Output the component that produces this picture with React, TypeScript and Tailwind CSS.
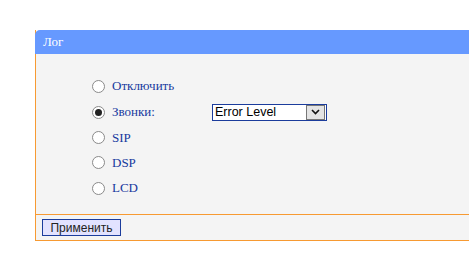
import React from 'react';

const options = [
  { label: 'Отключить', h: 'h-[26px]' },
  { label: 'Звонки:', h: 'h-[26px]', checked: true, select: true },
  { label: 'SIP', h: 'h-[25px]' },
  { label: 'DSP', h: 'h-[25px]' },
  { label: 'LCD', h: 'h-[26px]' },
];

const Radio: React.FC<{ checked?: boolean }> = ({ checked }) => (
  <span className="w-[13px] h-[13px] rounded-full border border-[#8a8a8a] bg-white flex items-center justify-center shrink-0">
    {checked && <span className="w-[7px] h-[7px] rounded-full bg-[#222]" />}
  </span>
);

export default function App() {
  return (
    <div className="w-[469px] h-[256px] bg-white overflow-hidden pt-[30px] pl-[35px]">
      <div className="w-[450px] border-l border-b border-[#f79a32]">
        {/* Header */}
        <div className="h-[24px] bg-[#6699ff] rounded-tl-[5px] -ml-px pl-[8px] flex items-center text-white text-[13px] font-['Liberation_Serif',serif]">
          Лог
        </div>

        {/* Options */}
        <div className="bg-[#f4f4f4] pt-[19px] pb-[13px] pl-[56px] flex flex-col font-['Liberation_Serif',serif] text-[13px] text-[#17399e]">
          {options.map((o) => (
            <div key={o.label} className={`${o.h} flex items-center`}>
              <Radio checked={o.checked} />
              <span className="ml-[7px] w-[100px]">{o.label}</span>
              {o.select && (
                <div className="w-[115px] h-[17px] border border-[#1b3c9c] bg-white flex items-center justify-between text-[12.5px] text-black font-['Liberation_Sans',sans-serif]">
                  <span className="pl-[2px] leading-none">Error Level</span>
                  <span className="w-[19px] h-[15px] mr-px border border-[#777] bg-[#e4e4e4] flex items-center justify-center">
                    <svg width="9" height="6" viewBox="0 0 9 6">
                      <path d="M1 1 L4.5 4.5 L8 1" fill="none" stroke="#111" strokeWidth="1.6" />
                    </svg>
                  </span>
                </div>
              )}
            </div>
          ))}
        </div>

        {/* Footer */}
        <div className="bg-[#f4f4f4] border-t border-[#f79a32] h-[26px] pl-[6px] flex items-center">
          <button className="h-[17px] w-[79px] border border-[#1b3c9c] bg-[#e2e2ff] text-[12px] leading-none text-[#222] font-['Liberation_Sans',sans-serif] flex items-center justify-center">
            Применить
          </button>
        </div>
      </div>
    </div>
  );
}
